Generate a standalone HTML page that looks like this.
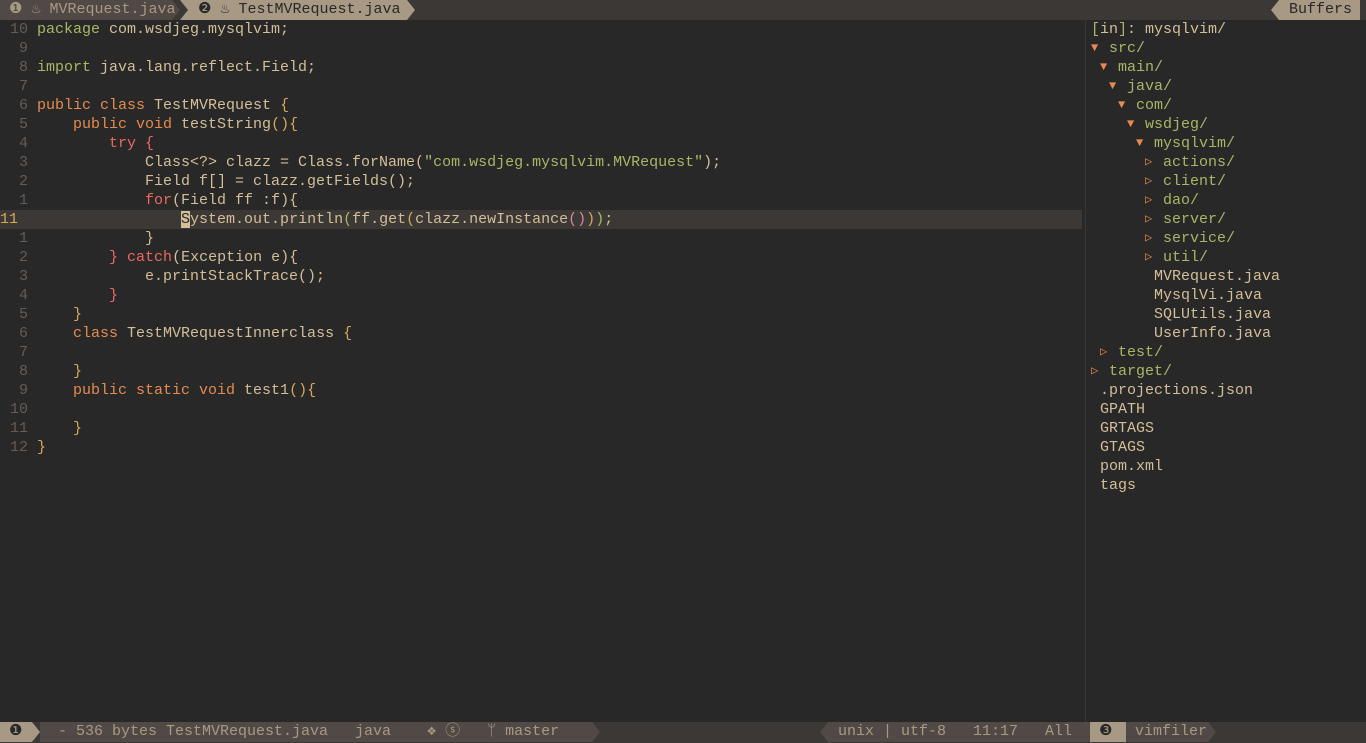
<!DOCTYPE html>
<html><head><meta charset="utf-8"><style>
*{margin:0;padding:0;box-sizing:border-box}
html,body{width:1366px;height:743px;background:#282828;overflow:hidden}
body{font-family:"Liberation Mono","DejaVu Sans Mono",monospace;font-size:15px;color:#d4be98;position:relative}
.bar{position:absolute;left:0;width:1366px;height:20px;background:#3c3836;line-height:20px;white-space:pre}
.seg{position:absolute;top:0;height:20px;line-height:20px;white-space:pre}
.row{position:absolute;height:19px;line-height:19px;white-space:pre;left:0}
.ln{position:absolute;left:0;width:28px;text-align:right;color:#665c54}
.k{color:#e78a4e}.r{color:#ea6962}.g{color:#a9b665}.s{color:#a9b665}.y{color:#d8a657}
.d{color:#a9b665}.a{color:#e78a4e;font-size:12px;line-height:19px;display:inline-block;width:9px;height:19px;vertical-align:top}
#sep{position:absolute;left:1085px;top:20px;width:1px;height:702px;background:#3c3836}
#tree{position:absolute;left:1091px;top:20px}
#tree div{height:19px;line-height:19px;white-space:pre;overflow:hidden}
</style></head><body>
<div class="bar" style="top:0;background:#3c3836">
 <div class="seg" style="left:0;width:180px;background:#504945;color:#a89984;clip-path:polygon(0 0,172px 0,180px 50%,172px 100%,0 100%)"> ❶ ♨ MVRequest.java</div>
 <div class="seg" style="left:180px;width:235px;background:#a89984;color:#282828;clip-path:polygon(0 0,227px 0,235px 50%,227px 100%,0 100%,8px 50%)">  ❷ ♨ TestMVRequest.java</div>
 <div class="seg" style="left:1271px;width:89px;background:#a89984;color:#282828;clip-path:polygon(8px 0,100% 0,100% 100%,8px 100%,0 50%)">  Buffers</div>
</div>
<div id="sep"></div>
<div style="position:absolute;left:0;top:210px;width:1082px;height:19px;background:#3c3836"></div>
<div class="bar" style="top:722px;height:21px;background:#3c3836;color:#a89984">
 <div class="seg" style="left:0;width:40px;background:#a89984;color:#282828;clip-path:polygon(0 0,32px 0,40px 50%,32px 100%,0 100%)"> ❶</div>
 <div class="seg" style="left:40px;width:560px;background:#504945;clip-path:polygon(0 0,552px 0,560px 50%,552px 100%,0 100%)">  - 536 bytes TestMVRequest.java   java    ❖ ⓢ   ᛘ master</div>
 <div class="seg" style="left:820px;width:270px;background:#504945;clip-path:polygon(8px 0,100% 0,100% 100%,8px 100%,0 50%)">  unix | utf-8   11:17   All</div>
 <div class="seg" style="left:1090px;width:36px;background:#a89984;color:#282828"> ❸</div>
 <div class="seg" style="left:1126px;width:90px;background:#504945;clip-path:polygon(0 0,82px 0,90px 50%,82px 100%,0 100%)"> vimfiler</div>
</div>
<div class="row" style="top:20px"><span class="ln">10</span><span style="position:absolute;left:37px"><span class="g">package</span> com.wsdjeg.mysqlvim;</span></div>
<div class="row" style="top:39px"><span class="ln">9</span></div>
<div class="row" style="top:58px"><span class="ln">8</span><span style="position:absolute;left:37px"><span class="g">import</span> java.lang.reflect.Field;</span></div>
<div class="row" style="top:77px"><span class="ln">7</span></div>
<div class="row" style="top:96px"><span class="ln">6</span><span style="position:absolute;left:37px"><span class="k">public class</span> TestMVRequest <span class="y">{</span></span></div>
<div class="row" style="top:115px"><span class="ln">5</span><span style="position:absolute;left:37px">    <span class="k">public void</span> testString<span class="y">(){</span></span></div>
<div class="row" style="top:134px"><span class="ln">4</span><span style="position:absolute;left:37px">        <span class="r">try</span> <span class="r">{</span></span></div>
<div class="row" style="top:153px"><span class="ln">3</span><span style="position:absolute;left:37px">            Class&lt;?&gt; clazz = Class.forName(<span class="s">"com.wsdjeg.mysqlvim.MVRequest"</span>);</span></div>
<div class="row" style="top:172px"><span class="ln">2</span><span style="position:absolute;left:37px">            Field f[] = clazz.getFields();</span></div>
<div class="row" style="top:191px"><span class="ln">1</span><span style="position:absolute;left:37px">            <span class="r">for</span>(Field ff :f){</span></div>
<div class="row" style="top:210px"><span class="ln" style="color:#d8a657;text-align:left">11</span><span style="position:absolute;left:37px">                <span style="background:#d4be98;color:#282828">S</span>ystem.out.println<span class="g">(</span>ff.get<span class="y">(</span>clazz.newInstance<span style="color:#d3869b">()</span><span class="y">)</span><span class="g">)</span>;</span></div>
<div class="row" style="top:229px"><span class="ln">1</span><span style="position:absolute;left:37px">            }</span></div>
<div class="row" style="top:248px"><span class="ln">2</span><span style="position:absolute;left:37px">        <span class="r">}</span> <span class="r">catch</span>(Exception e){</span></div>
<div class="row" style="top:267px"><span class="ln">3</span><span style="position:absolute;left:37px">            e.printStackTrace();</span></div>
<div class="row" style="top:286px"><span class="ln">4</span><span style="position:absolute;left:37px">        <span class="r">}</span></span></div>
<div class="row" style="top:305px"><span class="ln">5</span><span style="position:absolute;left:37px">    <span class="y">}</span></span></div>
<div class="row" style="top:324px"><span class="ln">6</span><span style="position:absolute;left:37px">    <span class="k">class</span> TestMVRequestInnerclass <span class="y">{</span></span></div>
<div class="row" style="top:343px"><span class="ln">7</span></div>
<div class="row" style="top:362px"><span class="ln">8</span><span style="position:absolute;left:37px">    <span class="y">}</span></span></div>
<div class="row" style="top:381px"><span class="ln">9</span><span style="position:absolute;left:37px">    <span class="k">public static void</span> test1<span class="y">(){</span></span></div>
<div class="row" style="top:400px"><span class="ln">10</span></div>
<div class="row" style="top:419px"><span class="ln">11</span><span style="position:absolute;left:37px">    <span class="y">}</span></span></div>
<div class="row" style="top:438px"><span class="ln">12</span><span style="position:absolute;left:37px"><span class="y">}</span></span></div>

<div id="tree">
<div><span class="d">[</span>in<span class="d">]</span>: mysqlvim/</div>
<div><span class="a">▼</span> <span class="d">src/</span></div>
<div> <span class="a">▼</span> <span class="d">main/</span></div>
<div>  <span class="a">▼</span> <span class="d">java/</span></div>
<div>   <span class="a">▼</span> <span class="d">com/</span></div>
<div>    <span class="a">▼</span> <span class="d">wsdjeg/</span></div>
<div>     <span class="a">▼</span> <span class="d">mysqlvim/</span></div>
<div>      <span class="a">▷</span> <span class="d">actions/</span></div>
<div>      <span class="a">▷</span> <span class="d">client/</span></div>
<div>      <span class="a">▷</span> <span class="d">dao/</span></div>
<div>      <span class="a">▷</span> <span class="d">server/</span></div>
<div>      <span class="a">▷</span> <span class="d">service/</span></div>
<div>      <span class="a">▷</span> <span class="d">util/</span></div>
<div>       MVRequest.java</div>
<div>       MysqlVi.java</div>
<div>       SQLUtils.java</div>
<div>       UserInfo.java</div>
<div> <span class="a">▷</span> <span class="d">test/</span></div>
<div><span class="a">▷</span> <span class="d">target/</span></div>
<div> .projections.json</div>
<div> GPATH</div>
<div> GRTAGS</div>
<div> GTAGS</div>
<div> pom.xml</div>
<div> tags</div>
</div>
</body></html>
